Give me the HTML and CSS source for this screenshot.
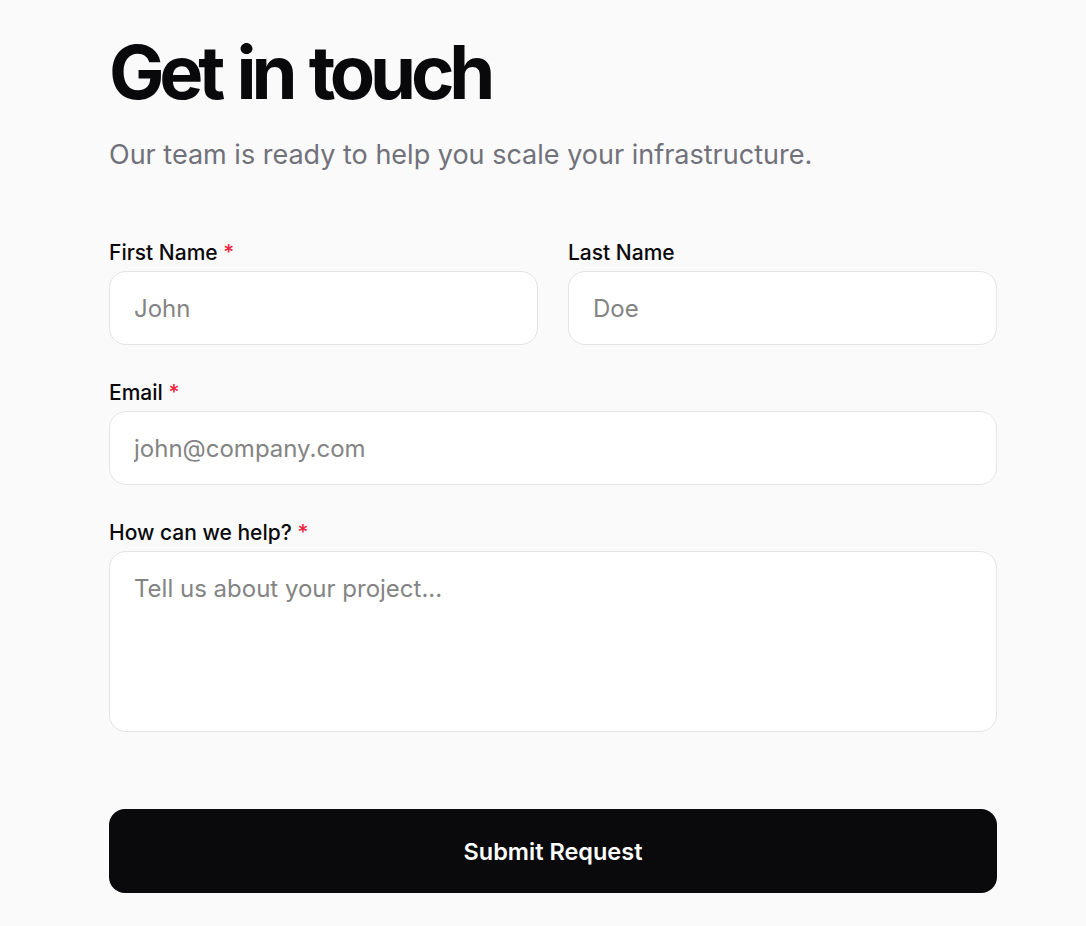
FILE: index.html
```html
<!DOCTYPE html>
<html lang="en">
<head>
<meta charset="utf-8">
<title>Get in touch</title>
<link rel="stylesheet" href="styles.css">
</head>
<body>
<main class="page">
  <h1 class="title">Get in touch</h1>
  <p class="subtitle">Our team is ready to help you scale your infrastructure.</p>
  <form class="form">
    <div class="row">
      <div class="field">
        <label class="label">First Name <span class="req">*</span></label>
        <input class="input" type="text" placeholder="John">
      </div>
      <div class="field">
        <label class="label">Last Name</label>
        <input class="input" type="text" placeholder="Doe">
      </div>
    </div>
    <div class="field">
      <label class="label">Email <span class="req">*</span></label>
      <input class="input" type="email" placeholder="john@company.com">
    </div>
    <div class="field">
      <label class="label">How can we help? <span class="req">*</span></label>
      <textarea class="input textarea" placeholder="Tell us about your project..."></textarea>
    </div>
    <button class="submit" type="button">Submit Request</button>
  </form>
</main>
</body>
</html>
```

FILE: styles.css
```css
* { box-sizing: border-box; }
html, body { margin: 0; padding: 0; background: #fafafa; }
body { font-family: Inter, "Noto Sans", sans-serif; color: #09090b; }
.page { width: 888px; margin-left: 109px; padding-top: 35px; }
.title { margin: 0; font-size: 74px; line-height: 1; font-weight: 700; letter-spacing: -0.07em; word-spacing: 4px; color: #09090b; }
.subtitle { margin: 28px 0 0; font-size: 27px; line-height: 1.3; color: #71717a; }
.form { margin-top: 66px; display: flex; flex-direction: column; gap: 33px; }
.row { display: grid; grid-template-columns: 1fr 1fr; gap: 30px; }
.field { display: flex; flex-direction: column; gap: 3px; }
.label { font-size: 21px; line-height: 30px; font-weight: 500; color: #09090b; }
.req { color: #ef233c; }
.input { width: 100%; height: 74px; padding: 0 24px; border: 1px solid #e4e4e7; border-radius: 17px; background: #fff; font-family: inherit; font-size: 24px; color: #09090b; outline: none; }
.input::placeholder { color: #848484; }
.textarea { height: 181px; padding-top: 22px; resize: none; display: block; }
.submit { margin-top: 44px; height: 84px; width: 100%; border: 0; border-radius: 16px; background: #0a0a0c; color: #fff; font-family: inherit; font-size: 23.5px; font-weight: 600; cursor: pointer; }
```
